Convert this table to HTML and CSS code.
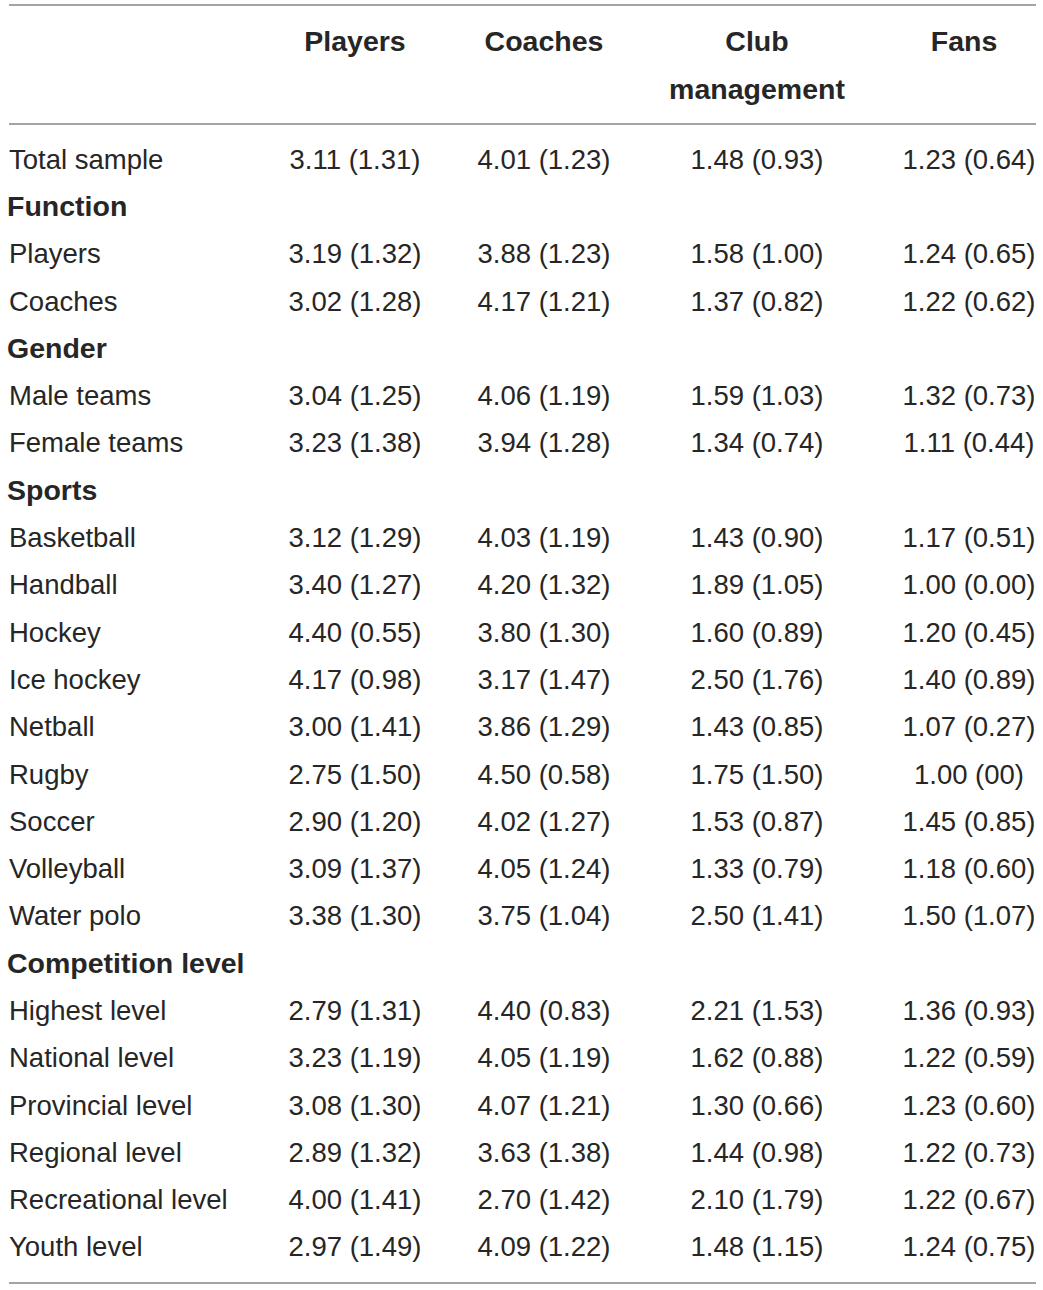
FILE: index.html
```html
<!DOCTYPE html>
<html lang="en">
<head>
    <meta charset="UTF-8">
    <meta name="viewport" content="width=device-width, initial-scale=1.0">
    <title>Perceived responsibility by group</title>
    <link rel="stylesheet" href="styles.css">
</head>
<body>
<div class="table">
    <div class="head">
        <div class="row head-row">
            <div class="cell"></div>
            <div class="cell">Players</div>
            <div class="cell">Coaches</div>
            <div class="cell">Club<br>management</div>
            <div class="cell fans-head">Fans</div>
        </div>
    </div>
    <div class="body">
        <div class="row"><div class="label">Total sample</div><div class="cell">3.11 (1.31)</div><div class="cell">4.01 (1.23)</div><div class="cell">1.48 (0.93)</div><div class="cell">1.23 (0.64)</div></div>
        <div class="row"><div class="section">Function</div></div>
        <div class="row"><div class="label">Players</div><div class="cell">3.19 (1.32)</div><div class="cell">3.88 (1.23)</div><div class="cell">1.58 (1.00)</div><div class="cell">1.24 (0.65)</div></div>
        <div class="row"><div class="label">Coaches</div><div class="cell">3.02 (1.28)</div><div class="cell">4.17 (1.21)</div><div class="cell">1.37 (0.82)</div><div class="cell">1.22 (0.62)</div></div>
        <div class="row"><div class="section">Gender</div></div>
        <div class="row"><div class="label">Male teams</div><div class="cell">3.04 (1.25)</div><div class="cell">4.06 (1.19)</div><div class="cell">1.59 (1.03)</div><div class="cell">1.32 (0.73)</div></div>
        <div class="row"><div class="label">Female teams</div><div class="cell">3.23 (1.38)</div><div class="cell">3.94 (1.28)</div><div class="cell">1.34 (0.74)</div><div class="cell">1.11 (0.44)</div></div>
        <div class="row"><div class="section">Sports</div></div>
        <div class="row"><div class="label">Basketball</div><div class="cell">3.12 (1.29)</div><div class="cell">4.03 (1.19)</div><div class="cell">1.43 (0.90)</div><div class="cell">1.17 (0.51)</div></div>
        <div class="row"><div class="label">Handball</div><div class="cell">3.40 (1.27)</div><div class="cell">4.20 (1.32)</div><div class="cell">1.89 (1.05)</div><div class="cell">1.00 (0.00)</div></div>
        <div class="row"><div class="label">Hockey</div><div class="cell">4.40 (0.55)</div><div class="cell">3.80 (1.30)</div><div class="cell">1.60 (0.89)</div><div class="cell">1.20 (0.45)</div></div>
        <div class="row"><div class="label">Ice hockey</div><div class="cell">4.17 (0.98)</div><div class="cell">3.17 (1.47)</div><div class="cell">2.50 (1.76)</div><div class="cell">1.40 (0.89)</div></div>
        <div class="row"><div class="label">Netball</div><div class="cell">3.00 (1.41)</div><div class="cell">3.86 (1.29)</div><div class="cell">1.43 (0.85)</div><div class="cell">1.07 (0.27)</div></div>
        <div class="row"><div class="label">Rugby</div><div class="cell">2.75 (1.50)</div><div class="cell">4.50 (0.58)</div><div class="cell">1.75 (1.50)</div><div class="cell">1.00 (00)</div></div>
        <div class="row"><div class="label">Soccer</div><div class="cell">2.90 (1.20)</div><div class="cell">4.02 (1.27)</div><div class="cell">1.53 (0.87)</div><div class="cell">1.45 (0.85)</div></div>
        <div class="row"><div class="label">Volleyball</div><div class="cell">3.09 (1.37)</div><div class="cell">4.05 (1.24)</div><div class="cell">1.33 (0.79)</div><div class="cell">1.18 (0.60)</div></div>
        <div class="row"><div class="label">Water polo</div><div class="cell">3.38 (1.30)</div><div class="cell">3.75 (1.04)</div><div class="cell">2.50 (1.41)</div><div class="cell">1.50 (1.07)</div></div>
        <div class="row"><div class="section">Competition level</div></div>
        <div class="row"><div class="label">Highest level</div><div class="cell">2.79 (1.31)</div><div class="cell">4.40 (0.83)</div><div class="cell">2.21 (1.53)</div><div class="cell">1.36 (0.93)</div></div>
        <div class="row"><div class="label">National level</div><div class="cell">3.23 (1.19)</div><div class="cell">4.05 (1.19)</div><div class="cell">1.62 (0.88)</div><div class="cell">1.22 (0.59)</div></div>
        <div class="row"><div class="label">Provincial level</div><div class="cell">3.08 (1.30)</div><div class="cell">4.07 (1.21)</div><div class="cell">1.30 (0.66)</div><div class="cell">1.23 (0.60)</div></div>
        <div class="row"><div class="label">Regional level</div><div class="cell">2.89 (1.32)</div><div class="cell">3.63 (1.38)</div><div class="cell">1.44 (0.98)</div><div class="cell">1.22 (0.73)</div></div>
        <div class="row"><div class="label">Recreational level</div><div class="cell">4.00 (1.41)</div><div class="cell">2.70 (1.42)</div><div class="cell">2.10 (1.79)</div><div class="cell">1.22 (0.67)</div></div>
        <div class="row"><div class="label">Youth level</div><div class="cell">2.97 (1.49)</div><div class="cell">4.09 (1.22)</div><div class="cell">1.48 (1.15)</div><div class="cell">1.24 (0.75)</div></div>
    </div>
</div>
</body>
</html>
```

FILE: styles.css
```css
body {
    font-family: "Liberation Sans", Arial, sans-serif;
    font-size: 27.5px;
    color: #262626;
    background: #fff;
    margin: 0;
}
.table {
    margin: 4px 0 0 9px;
    width: 1027px;
    border-top: 2px solid #a3a3a3;
    border-bottom: 2px solid #a3a3a3;
}
.head {
    padding: 11px 0 10px;
    border-bottom: 2px solid #a3a3a3;
    font-weight: bold;
    font-size: 28.5px;
}
.body {
    padding: 11px 0;
}
.row {
    display: grid;
    grid-template-columns: 225px 242px 136px 290px 134px;
    align-items: center;
    height: 47.3px;
    white-space: nowrap;
}
.head-row {
    height: auto;
    align-items: start;
    line-height: 48px;
}
.cell {
    text-align: center;
}
.fans-head {
    padding-right: 10px;
}
.label {
    text-align: left;
}
.section {
    grid-column: 1 / -1;
    font-weight: bold;
    font-size: 28.5px;
    margin-left: -2px;
}
```
